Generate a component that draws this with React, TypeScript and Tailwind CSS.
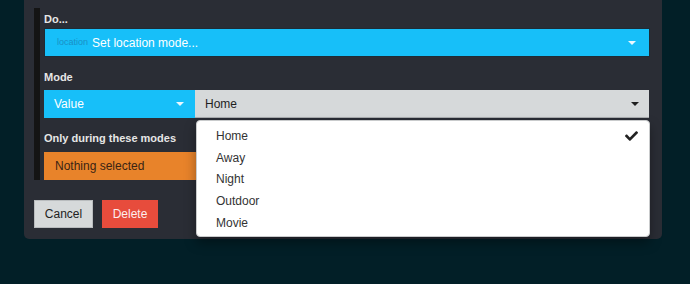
import React from "react";

function Caret({ color }: { color: string }) {
  return (
    <svg width="8" height="4" viewBox="0 0 8 4" className="shrink-0">
      <path d="M0 0 L8 0 L4 4 Z" fill={color} />
    </svg>
  );
}

export default function App() {
  const items = ["Home", "Away", "Night", "Outdoor", "Movie"];
  return (
    <div className="w-[690px] h-[284px] overflow-hidden bg-[#021f27] font-['Liberation_Sans',Arial,sans-serif]">
      <div className="relative ml-[24px] w-[638px] rounded-b-[5px] bg-[#2a2d35] pt-[8px] pl-[10px] pr-[12px] pb-[11px]">
        <div className="border-l-[6px] border-[#141414] pl-[4px]">
          <div className="h-[20px] pt-[1px] leading-[20px] text-[11px] font-bold text-[#e6e6e6]">Do...</div>
          <div className="flex h-[29px] items-center border border-[#1d2c36] bg-[#17bff9] pl-[12px] pr-[10px]">
            <span className="mr-[4px] text-[9px] text-[#1a8fc6]">location</span>
            <span className="text-[12px] text-white">Set location mode...</span>
            <div className="ml-auto mr-[3px]">
              <Caret color="#eaf8ff" />
            </div>
          </div>
          <div className="mt-[10px] mb-[3px] h-[20px] leading-[20px] text-[11px] font-bold text-[#e6e6e6]">Mode</div>
          <div className="flex h-[28px]">
            <div className="flex w-[151px] items-center bg-[#17bff9] pl-[10px] pr-[11px]">
              <span className="text-[12px] text-white">Value</span>
              <div className="ml-auto">
                <Caret color="#eaf8ff" />
              </div>
            </div>
            <div className="flex flex-1 items-center border-b border-[#a9acae] bg-[#d6d9da] pl-[10px] pr-[10px] mr-[1px]">
              <span className="text-[12px] text-[#1e1e1e]">Home</span>
              <div className="ml-auto">
                <Caret color="#1e1e1e" />
              </div>
            </div>
          </div>
          <div className="mt-[10px] mb-[4px] h-[20px] leading-[20px] text-[11px] font-bold text-[#e6e6e6]">Only during these modes</div>
          <div className="flex h-[28px] items-center bg-[#e8832a] pl-[11px]">
            <span className="text-[12px] text-[#3a2414]">Nothing selected</span>
          </div>
        </div>
        <div className="mt-[20px] flex h-[28px] gap-[9px]">
          <button className="h-[28px] w-[59px] border border-[#b9bcbe] bg-[#d6d9da] text-[12px] text-[#222]">Cancel</button>
          <button className="h-[28px] w-[56px] bg-[#e74c3c] text-[12px] text-[#fdeeee]">Delete</button>
          <button className="ml-auto h-[28px] w-[60px] bg-[#17bff9] text-[12px] text-white">Save</button>
        </div>

        <div className="absolute left-[172px] top-[120px] h-[117px] w-[454px] rounded-[4px] border border-[#c9cbcc] bg-white pt-[4px] shadow-[0_6px_12px_rgba(0,0,0,0.35)]">
          {items.map((it, i) => (
            <div key={it} className="flex h-[21.7px] items-center pl-[19px] pr-[11px] text-[12px] text-[#333]">
              <span>{it}</span>
              {i === 0 && (
                <svg className="ml-auto" width="13" height="10" viewBox="0 0 512 380">
                  <path
                    transform="translate(0,-66)"
                    d="M173.898 439.404l-166.4-166.4c-9.997-9.997-9.997-26.206 0-36.204l36.203-36.204c9.997-9.998 26.207-9.998 36.204 0L192 312.69 432.095 72.596c9.997-9.997 26.207-9.997 36.204 0l36.203 36.204c9.997 9.997 9.997 26.206 0 36.204l-294.4 294.401c-9.998 9.997-26.207 9.997-36.204-.001z"
                    fill="#222"
                  />
                </svg>
              )}
            </div>
          ))}
        </div>
      </div>
    </div>
  );
}
